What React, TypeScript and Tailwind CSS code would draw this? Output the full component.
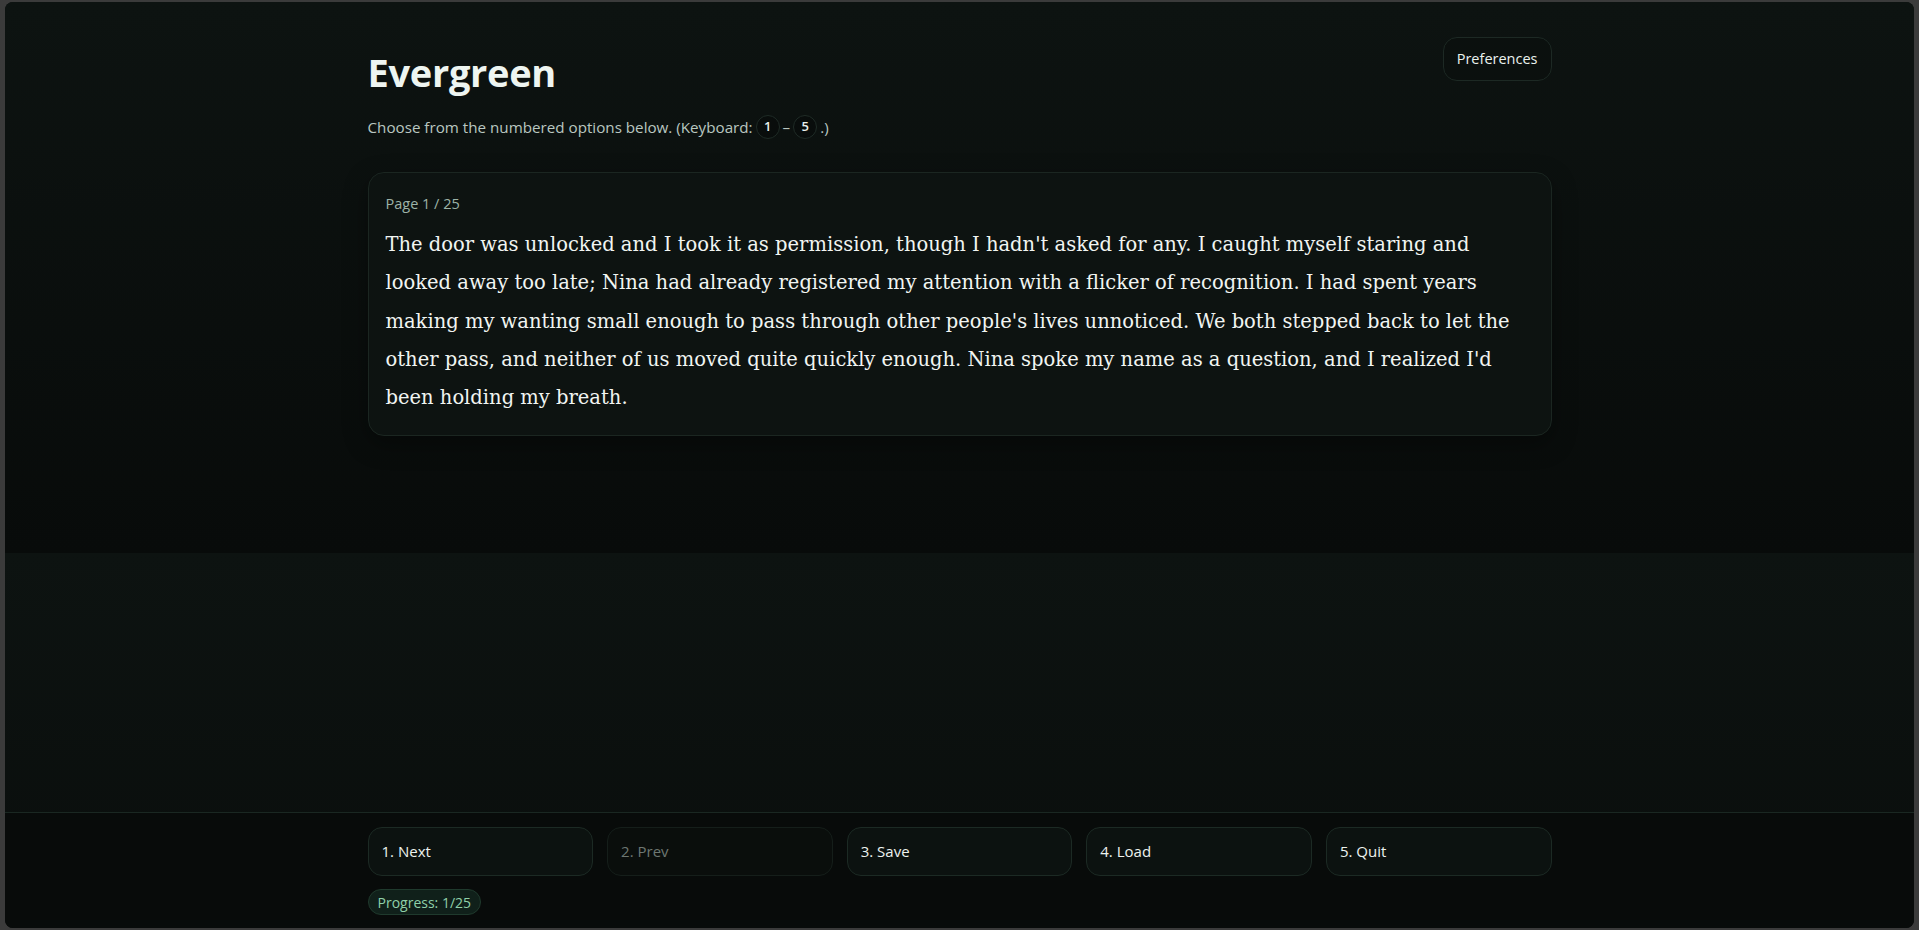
import React from 'react';

const storyLines = [
  "The door was unlocked and I took it as permission, though I hadn't asked for any. I caught myself staring and",
  'looked away too late; Nina had already registered my attention with a flicker of recognition. I had spent years',
  "making my wanting small enough to pass through other people's lives unnoticed. We both stepped back to let the",
  "other pass, and neither of us moved quite quickly enough. Nina spoke my name as a question, and I realized I'd",
  'been holding my breath.',
];

const choices = [
  { label: '1. Next', disabled: false },
  { label: '2. Prev', disabled: true },
  { label: '3. Save', disabled: false },
  { label: '4. Load', disabled: false },
  { label: '5. Quit', disabled: false },
];

function Kbd({ children }: { children: React.ReactNode }) {
  return (
    <span className="inline-flex h-[24px] min-w-[24px] items-center justify-center rounded-full border border-[#1f2b26] bg-[#090d0c] px-[7px] text-[13px] font-semibold text-[#e9f0ec]">
      {children}
    </span>
  );
}

export default function App() {
  return (
    <div className="h-[930px] bg-[#3b3b3b] px-[5px] pt-[2px] pb-[2px] font-['Open_Sans',sans-serif]">
      <div className="flex h-full flex-col overflow-hidden rounded-[8px] bg-[#080b0a]">
        <main className="flex-1 bg-[linear-gradient(180deg,#0d1311_0%,#080b0a_100%)] bg-[length:100%_551px] bg-repeat-y">
          <div className="mx-auto w-[1184px] pt-[35px]">
            <header className="flex items-start justify-between">
              <div className="pt-[12px]">
                <h1 className="text-[38px] font-bold leading-[46px] tracking-[-0.3px] text-[#eef5f1]">Evergreen</h1>
                <p className="mt-[20px] flex h-[24px] items-center gap-[3px] text-[15.2px] text-[#b9c7c0]">
                  <span>Choose from the numbered options below. (Keyboard:</span>
                  <Kbd>1</Kbd>
                  <span>–</span>
                  <Kbd>5</Kbd>
                  <span>.)</span>
                </p>
              </div>
              <button className="h-[44px] rounded-[14px] border border-[#1d2924] bg-[#0b100e] px-[13px] text-[14.5px] text-[#eaf2ee]">
                Preferences
              </button>
            </header>

            <section className="mt-[33px] rounded-[16px] border border-[#1b2621] bg-[#0d1311] px-[17px] pt-[21px] pb-[18px] shadow-[0_8px_24px_rgba(0,0,0,0.35)]">
              <div className="text-[14.5px] leading-[20px] text-[#9db3a8]">Page 1 / 25</div>
              <div className="mt-[12px] font-['DejaVu_Serif',serif] text-[19.5px] leading-[38.3px] text-[#f1f5f2]">
                {storyLines.map(line => (
                  <span key={line} className="block whitespace-nowrap">
                    {line}
                  </span>
                ))}
              </div>
            </section>
          </div>
        </main>

        <footer className="border-t border-[#1a2722] bg-[#080b0a] pt-[14px] pb-[13px]">
          <div className="mx-auto w-[1184px]">
            <div className="grid grid-cols-5 gap-[14px]">
              {choices.map(c => (
                <button
                  key={c.label}
                  disabled={c.disabled}
                  className={`h-[49px] rounded-[14px] border px-[13px] text-left text-[15px] ${
                    c.disabled
                      ? 'border-[#151e1a] bg-[#0a0e0c] text-[#6d7772]'
                      : 'border-[#1c2a24] bg-[#0c1210] text-[#edf3ef]'
                  }`}
                >
                  {c.label}
                </button>
              ))}
            </div>
            <div className="mt-[13px]">
              <span className="inline-flex h-[26px] items-center rounded-full border border-[#1f3a2d] bg-[#10201a] px-[9px] text-[14px] text-[#8fd0a9]">
                Progress: 1/25
              </span>
            </div>
          </div>
        </footer>
      </div>
    </div>
  );
}
